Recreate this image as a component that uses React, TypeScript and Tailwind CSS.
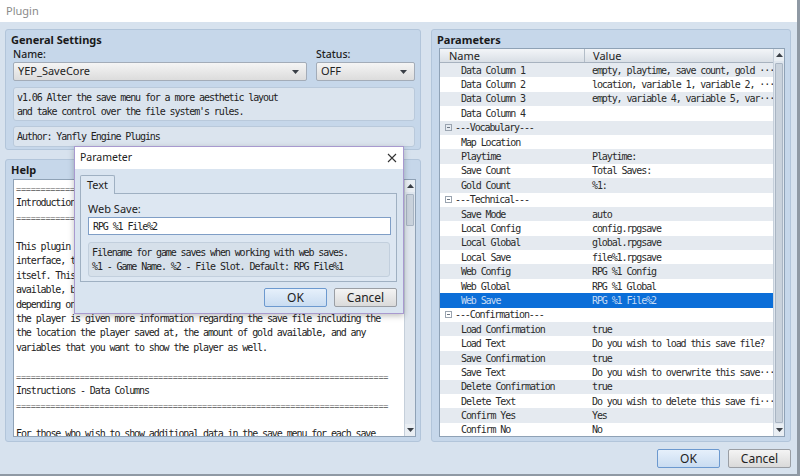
import React from "react";

type Row = { name: string; value?: string; group?: boolean; selected?: boolean };

const rows: Row[] = [
  { name: "Data Column 1", value: "empty, playtime, save count, gold ···" },
  { name: "Data Column 2", value: "location, variable 1, variable 2, ···" },
  { name: "Data Column 3", value: "empty, variable 4, variable 5, var···" },
  { name: "Data Column 4" },
  { name: "---Vocabulary---", group: true },
  { name: "Map Location" },
  { name: "Playtime", value: "Playtime:" },
  { name: "Save Count", value: "Total Saves:" },
  { name: "Gold Count", value: "%1:" },
  { name: "---Technical---", group: true },
  { name: "Save Mode", value: "auto" },
  { name: "Local Config", value: "config.rpgsave" },
  { name: "Local Global", value: "global.rpgsave" },
  { name: "Local Save", value: "file%1.rpgsave" },
  { name: "Web Config", value: "RPG %1 Config" },
  { name: "Web Global", value: "RPG %1 Global" },
  { name: "Web Save", value: "RPG %1 File%2", selected: true },
  { name: "---Confirmation---", group: true },
  { name: "Load Confirmation", value: "true" },
  { name: "Load Text", value: "Do you wish to load this save file?" },
  { name: "Save Confirmation", value: "true" },
  { name: "Save Text", value: "Do you wish to overwrite this save···" },
  { name: "Delete Confirmation", value: "true" },
  { name: "Delete Text", value: "Do you wish to delete this save fi···" },
  { name: "Confirm Yes", value: "Yes" },
  { name: "Confirm No", value: "No" },
];

const bar = "============================================================================";

const helpLines = [
  bar,
  "Introduction",
  bar,
  "",
  "This plugin alters the save menu's aesthetic appearance and the save menu's",
  "interface, the latter of which provides the player with more control over",
  "itself. This plugin also makes the save menu show the save files that are",
  "available, but also how the player can interact with those save files",
  "depending on their settings. When a save file is selected in the save menu,",
  "the player is given more information regarding the save file including the",
  "the location the player saved at, the amount of gold available, and any",
  "variables that you want to show the player as well.",
  "",
  bar,
  "Instructions - Data Columns",
  bar,
  "",
  "For those who wish to show additional data in the save menu for each save",
];

const mono = "font-['DejaVu_Sans_Mono',monospace] text-[10px] tracking-[-1.1px]";
const sans = "font-['Noto_Sans',sans-serif]";

const Arrow = ({ up }: { up?: boolean }) => (
  <svg width="7" height="4" viewBox="0 0 7 4">
    <path d={up ? "M0 4 L3.5 0 L7 4 Z" : "M0 0 L3.5 4 L7 0 Z"} fill="#3a3f46" />
  </svg>
);

const Dropdown = ({ text, w }: { text: string; w: string }) => (
  <div
    className={`${w} h-[19px] flex items-center justify-between pl-[4px] pr-[7px] rounded-[2px] border border-[#a3acb8] bg-gradient-to-b from-[#f5f5f5] to-[#dcdcdc] ${sans} text-[11px] text-[#222]`}
  >
    <span>{text}</span>
    <Arrow />
  </div>
);

const Btn = ({ label, primary }: { label: string; primary?: boolean }) => (
  <div
    className={`w-[63px] h-[19px] flex items-center justify-center rounded-[2px] border ${sans} text-[12px] text-[#222] ${
      primary
        ? "border-[#6c99cf] bg-gradient-to-b from-[#e6f0fb] to-[#c9dcf1]"
        : "border-[#9a9ea4] bg-gradient-to-b from-[#f4f4f4] to-[#dadada]"
    }`}
  >
    {label}
  </div>
);

const Scrollbar = ({ thumbTop, thumbH }: { thumbTop: string; thumbH: string }) => (
  <div className="w-[11px] h-full flex flex-col bg-[#dfe6ee] border-l border-[#c5cfda]">
    <div className="h-[12px] flex items-center justify-center bg-[#e9eef3]">
      <Arrow up />
    </div>
    <div className="flex-1 relative">
      <div className={`absolute left-[1px] right-[1px] ${thumbTop} ${thumbH} bg-[#c9d2dc] border border-[#a9b5c3] rounded-[1px]`} />
    </div>
    <div className="h-[12px] flex items-center justify-center bg-[#e9eef3]">
      <Arrow />
    </div>
  </div>
);

const GroupTitle = ({ children }: { children: React.ReactNode }) => (
  <div className={`h-[14px] leading-[14px] pl-[4px] ${sans} text-[11px] font-bold text-[#1a1a1a]`}>{children}</div>
);

export default function App() {
  return (
    <div className="w-[800px] h-[476px] bg-[#d7e2ee] flex flex-col overflow-hidden relative border-b-[2px] border-r-[3px] border-[#8f99a4]">
      <div className={`h-[22px] shrink-0 bg-white flex items-center pl-[6px] ${sans} text-[11px] text-[#8a8a8a]`}>Plugin</div>

      <div className="flex gap-[10px] pl-[5px] pt-[7px]">
        <div className="w-[416px] flex flex-col gap-[9px]">
          <div className="h-[121px] rounded-[3px] border border-[#b2c5da] bg-[#c6d7ea] pt-[3px] px-[1px]">
            <GroupTitle>General Settings</GroupTitle>
            <div className="pl-[6px] pr-[4px]">
              <div className={`flex h-[13px] mt-[1px] leading-[13px] ${sans} text-[10.5px] font-medium text-[#1e1e1e]`}>
                <span className="w-[303px]">Name:</span>
                <span>Status:</span>
              </div>
              <div className="flex gap-[9px] mt-[1px]">
                <Dropdown text="YEP_SaveCore" w="w-[294px]" />
                <Dropdown text="OFF" w="w-[99px]" />
              </div>
              <div className={`mt-[6px] h-[34px] rounded-[3px] border border-[#b9c9db] bg-[#dbe4ee] px-[3px] pt-[3px] leading-[14px] ${mono} text-[#222]`}>
                <div>v1.06 Alter the save menu for a more aesthetic layout</div>
                <div>and take control over the file system's rules.</div>
              </div>
              <div className={`mt-[5px] h-[21px] rounded-[3px] border border-[#b9c9db] bg-[#dbe4ee] px-[3px] flex items-center ${mono} text-[#222]`}>
                Author: Yanfly Engine Plugins
              </div>
            </div>
          </div>

          <div className="h-[283px] rounded-[3px] border border-[#b2c5da] bg-[#c6d7ea] pt-[3px] px-[1px]">
            <GroupTitle>Help</GroupTitle>
            <div className="ml-[6px] mt-[2px] w-[403px] h-[258px] flex border border-[#8fa2b6] bg-white">
              <div className={`flex-1 overflow-hidden pl-[2px] pt-[2px] leading-[14.45px] whitespace-pre ${mono} text-[#222]`}>
                {helpLines.map((l, i) => (
                  <div
                    key={i}
                    className={`h-[14.45px] ${l === bar ? "text-[8.5px] tracking-[-0.22px] text-[#555]" : ""}`}
                  >
                    {l}
                  </div>
                ))}
              </div>
              <Scrollbar thumbTop="top-[2px]" thumbH="h-[32px]" />
            </div>
          </div>
        </div>

        <div className="w-[360px] h-[413px] rounded-[3px] border border-[#b2c5da] bg-[#c6d7ea] pt-[3px] px-[1px]">
          <GroupTitle>Parameters</GroupTitle>
          <div className="ml-[6px] mt-[1px] w-[346px] h-[389px] flex border border-[#8fa2b6] bg-white">
            <div className="flex-1 flex flex-col overflow-hidden">
              <div className={`h-[14px] shrink-0 flex border-b border-[#a7b2bf] bg-gradient-to-b from-[#f3f5f8] to-[#d9dfe6] ${sans} text-[11px] text-[#222] leading-[14px]`}>
                <div className="w-[145px] pl-[9px] border-r border-[#b3bdc8]">Name</div>
                <div className="pl-[8px]">Value</div>
              </div>
              {rows.map((r, i) => (
                <div
                  key={i}
                  className={`h-[14.4px] shrink-0 flex items-center whitespace-pre ${mono} ${
                    r.selected ? "bg-[#0b6ed8] text-[#c6dbf4]" : i % 2 === 0 ? "bg-[#e5eaf0] text-[#2a2a2a]" : "bg-white text-[#2a2a2a]"
                  }`}
                >
                  {r.group ? (
                    <div className="flex items-center pl-[5px]">
                      <span className="w-[7px] h-[7px] border border-[#9aa4b0] flex items-center justify-center mr-[3px]">
                        <span className="w-[3px] h-px bg-[#6c7683]" />
                      </span>
                      {r.name}
                    </div>
                  ) : (
                    <>
                      <div className="w-[152px] pl-[21px] shrink-0">{r.name}</div>
                      <div>{r.value ?? ""}</div>
                    </>
                  )}
                </div>
              ))}
            </div>
            <Scrollbar thumbTop="top-[2px]" thumbH="h-[360px]" />
          </div>
        </div>
      </div>

      <div className="flex justify-end gap-[8px] pr-[6px] mt-[7px]">
        <Btn label="OK" primary />
        <Btn label="Cancel" />
      </div>

      <div className="absolute left-[74px] top-[146px] w-[330px] h-[168px] border border-[#a899cf] bg-[#d9e4f0] shadow-[0_2px_6px_rgba(0,0,0,0.25)]">
        <div className={`h-[22px] bg-white flex items-center justify-between pl-[5px] pr-[6px] ${sans} text-[10.5px] text-[#222]`}>
          <span>Parameter</span>
          <svg width="10" height="10" viewBox="0 0 10 10">
            <path d="M1 1 L9 9 M9 1 L1 9" stroke="#333" strokeWidth="1.1" />
          </svg>
        </div>
        <div className="pl-[5px] pt-[6px]">
          <div className={`w-[35px] h-[19px] border border-b-0 border-[#9fb0c2] bg-[#dde7f2] rounded-t-[2px] flex items-center justify-center ${sans} text-[11px] text-[#222] relative z-10`}>
            Text
          </div>
          <div className="-mt-px w-[317px] h-[89px] border border-[#9fb0c2] bg-[#dde7f2] pl-[7px] pt-[8px]">
            <div className={`h-[14px] leading-[14px] ${sans} text-[11px] text-[#222]`}>Web Save:</div>
            <div className={`mt-[1px] w-[303px] h-[18px] border border-[#7f9ec6] bg-white pl-[4px] flex items-center ${mono} text-[#222]`}>
              RPG %1 File%2
            </div>
            <div className={`mt-[7px] w-[302px] h-[35px] rounded-[3px] border border-[#c2cfdd] bg-[#d6e0ea] pl-[3px] pt-[3px] leading-[14px] ${mono} text-[#222]`}>
              <div>Filename for game saves when working with web saves.</div>
              <div>%1 - Game Name. %2 - File Slot. Default: RPG File%1</div>
            </div>
          </div>
          <div className="flex justify-end gap-[7px] pr-[6px] mt-[6px]">
            <Btn label="OK" primary />
            <Btn label="Cancel" />
          </div>
        </div>
      </div>
    </div>
  );
}
